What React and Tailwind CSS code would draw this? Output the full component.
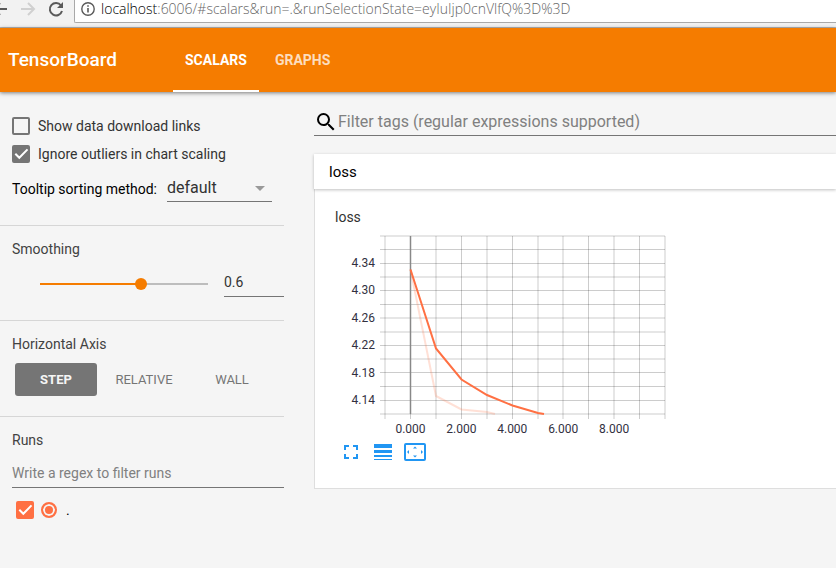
import { useState } from "react";

const xTicks = [385, 410.5, 436, 461.5, 487, 512.5, 538, 563, 588.5, 614, 639.5, 665].map((x) => x - 335);
const yTicks = [236, 249.5, 263.5, 277, 290.5, 304.5, 318, 332, 345.5, 359, 372.5, 386.5, 400.5, 414].map((y) => y - 230);
const yLabels = ["4.34", "4.30", "4.26", "4.22", "4.18", "4.14"];
const xLabels = ["0.000", "2.000", "4.000", "6.000", "8.000"];

function Check({ id, checked, onChange, accent, label }) {
  return (
    <span className="relative block h-[18px] w-[18px] shrink-0">
      <input
        id={id}
        type="checkbox"
        aria-label={label}
        checked={checked}
        onChange={onChange}
        className={
          "block h-[18px] w-[18px] appearance-none rounded-xs border-2 " +
          (accent
            ? "border-[#ff7043] checked:bg-[#ff7043]"
            : "border-[#757575] checked:bg-[#757575]")
        }
      />
      {checked && (
        <svg viewBox="0 0 18 18" className="pointer-events-none absolute inset-0 h-full w-full">
          <path d="M3.300 8.800l4 4 8.200-8.400" fill="none" stroke="#fff" strokeWidth="2" />
        </svg>
      )}
    </span>
  );
}

function BrowserBar() {
  return (
    <div className="flex h-7 items-start border-b border-[#b5b5b5] bg-[#f2f2f2]">
      <div className="flex w-[74px] shrink-0 items-center">
        <svg width="74" height="20" viewBox="0 0 74 20" fill="none" strokeWidth="2">
          <path d="M-6 9H7M0 3l-6 6 6 6" stroke="#5a5a5a" />
          <path d="M21 9h12M28 3l6 6-6 6" stroke="#d0d0d0" />
          <path d="M61 5.5A6.2 6.2 0 1 0 62 11" stroke="#5a5a5a" />
          <path d="M63 2v6h-6z" fill="#5a5a5a" />
        </svg>
      </div>
      <div className="flex h-[23px] flex-1 items-start gap-1.5 overflow-hidden rounded-bl-xs border-b border-l border-[#a9a9a9] bg-white pl-1.5">
        <svg width="14" height="18" viewBox="0 0 14 18" className="shrink-0">
          <circle cx="7" cy="9" r="6.2" fill="none" stroke="#5a5a5a" strokeWidth="1.4" />
          <path d="M7 8v4.5M7 5.2v1.6" stroke="#5a5a5a" strokeWidth="1.6" />
        </svg>
        <div className="font-['Open_Sans','Noto_Sans',sans-serif] text-sm leading-[18px] font-light whitespace-nowrap text-[#666]">
          <span className="text-black">localhost</span>:6006/#scalars&amp;run=.&amp;runSelectionState=eyIuIjp0cnVlfQ%3D%3D
        </div>
      </div>
    </div>
  );
}

function Chart() {
  return (
    <svg width="340" height="210" viewBox="0 0 340 210" className="block" role="img" aria-label="loss">
      <g stroke="#000" strokeOpacity="0.2" strokeWidth="1">
        {xTicks.map((x) => (
          <line key={x} x1={x} x2={x} y1="6" y2="189" />
        ))}
        {yTicks.map((y) => (
          <line key={y} x1="45" x2="330" y1={y} y2={y} />
        ))}
      </g>
      <path d="M75.5 6v178" stroke="#888" strokeWidth="1.5" />
      <path d="M75.5 39.5L101 166l25.5 13.5L152 182l8 2" fill="none" stroke="#ff7043" strokeOpacity="0.22" strokeWidth="2" />
      <path d="M75.5 39.5L101 118.5l25.5 31L152 165l25.5 10.5L203 183l6 1" fill="none" stroke="#ff7043" strokeWidth="2" />
      <g fill="#32313f" className="font-[Roboto,sans-serif] text-xs">
        {yLabels.map((t, i) => (
          <text key={t} x="40" y={37 + i * 27.4} textAnchor="end">{t}</text>
        ))}
        {xLabels.map((t, i) => (
          <text key={t} x={75.5 + i * 50.9} y="203" textAnchor="middle">{t}</text>
        ))}
      </g>
    </svg>
  );
}

export default function App() {
  const [links, setLinks] = useState(false);
  const [outliers, setOutliers] = useState(true);
  const [run, setRun] = useState(true);
  const [smooth, setSmooth] = useState("0.6");

  return (
    <div className="min-h-screen overflow-x-hidden bg-[#f5f5f5] font-[Roboto,sans-serif] text-sm leading-5 text-[#333]">
      <BrowserBar />
      <header className="relative flex h-16 items-stretch bg-[#f57c00] pl-2 text-white shadow-[0_1px_4px_rgba(0,0,0,0.5)]">
        <h1 className="flex w-[165px] items-center text-[19px] font-medium">TensorBoard</h1>
        <nav className="flex text-sm font-bold">
          <button className="border-b-2 border-white px-3 pt-0.5">SCALARS</button>
          <button className="border-b-2 border-transparent px-4 pt-0.5 text-white/75">GRAPHS</button>
        </nav>
      </header>

      <div className="flex">
        <aside className="w-[284px] shrink-0">
          <section className="border-b border-[#d6d6d6] pt-6 pb-[23px] pl-3">
            <div className="flex h-5 items-center gap-2">
              <Check id="links" checked={links} onChange={() => setLinks(!links)} />
              <label htmlFor="links">Show data download links</label>
            </div>
            <div className="mt-2 flex h-5 items-center gap-2">
              <Check id="outliers" checked={outliers} onChange={() => setOutliers(!outliers)} />
              <label htmlFor="outliers">Ignore outliers in chart scaling</label>
            </div>
            <div className="mt-2.5 flex h-7 items-center justify-between pr-3">
              <label htmlFor="sorting" className="pt-0.5 text-black">Tooltip sorting method:</label>
              <div className="relative w-[105px]">
                <select id="sorting" className="block h-7 w-full appearance-none border-b border-[#757575] text-base leading-6">
                  <option>default</option>
                </select>
                <svg width="10" height="5" viewBox="0 0 10 5" className="pointer-events-none absolute top-3 right-[7px]">
                  <path d="M0 0h10L5 5z" fill="#999" />
                </svg>
              </div>
            </div>
          </section>

          <section className="border-b border-[#d6d6d6] pt-[13px] pb-[23px] pl-3">
            <h2 className="text-[#424242]">Smoothing</h2>
            <div className="mt-3 flex items-center justify-end gap-2.5">
              <input
                type="range"
                aria-label="Smoothing"
                min="0"
                max="1"
                step="0.1"
                value={smooth}
                onChange={(e) => setSmooth(e.target.value)}
                className="h-3 w-[180px] appearance-none bg-[linear-gradient(to_right,#f57c00_60%,#bdbdbd_60%)] bg-[length:168px_2px] bg-center bg-no-repeat [&::-webkit-slider-thumb]:h-3 [&::-webkit-slider-thumb]:w-3 [&::-webkit-slider-thumb]:appearance-none [&::-webkit-slider-thumb]:rounded-full [&::-webkit-slider-thumb]:bg-[#f57c00]"
              />
              <input
                type="text"
                aria-label="Smoothing value"
                value={smooth}
                onChange={(e) => setSmooth(e.target.value)}
                className="h-[26px] w-[60px] border-b border-[#757575] pb-1"
              />
            </div>
          </section>

          <section className="border-b border-[#d6d6d6] pt-[13px] pb-5 pl-3">
            <h2 className="text-[#424242]">Horizontal Axis</h2>
            <div className="mt-[9px] flex h-[33px] gap-1.5 pl-[3px] text-[13px] text-[#757575]">
              <button className="w-[82px] rounded-[3px] bg-[#757575] font-bold text-[#f5f5f5]">STEP</button>
              <button className="w-[82px]">RELATIVE</button>
              <button className="w-[82px]">WALL</button>
            </div>
          </section>

          <section className="pt-[13px] pl-3">
            <h2 className="text-[#424242]">Runs</h2>
            <input
              type="text"
              aria-label="Filter runs"
              placeholder="Write a regex to filter runs"
              className="mt-[11px] block h-[27px] w-full border-b border-[#757575] pb-0.5 placeholder:text-[#808080]"
            />
            <div className="mt-3 flex h-5 items-center gap-[7px] pl-1">
              <Check id="run" accent label="Show run" checked={run} onChange={() => setRun(!run)} />
              <input
                id="only"
                type="radio"
                name="only"
                defaultChecked
                className="h-4 w-4 appearance-none rounded-full border-2 border-[#ff7043] checked:bg-[#ff7043] checked:shadow-[inset_0_0_0_2px_#f5f5f5]"
              />
              <label htmlFor="only" className="pl-0.5 text-black">.</label>
            </div>
          </section>
        </aside>

        <main className="ml-[30px] min-w-0 flex-1 pt-[15px]">
          <div className="flex h-[29px] items-center border-b border-[#757575] pt-0.5">
            <svg width="24" height="24" viewBox="0 0 24 24" className="shrink-0">
              <path d="M15.5 14h-.79l-.28-.27A6.471 6.471 0 0 0 16 9.5 6.5 6.5 0 1 0 9.500 16c1.610 0 3.090-.59 4.230-1.570l.27.28v.79l5 4.990L20.490 19l-4.990-5zm-6 0C7.010 14 5 11.990 5 9.500S7.010 5 9.500 5 14 7.010 14 9.500 11.990 14 9.500 14z" />
            </svg>
            <input
              type="text"
              aria-label="Filter tags"
              placeholder="Filter tags (regular expressions supported)"
              className="min-w-0 flex-1 text-base placeholder:text-[#808080]"
            />
          </div>

          <div className="mt-[18px]">
            <button className="relative block h-[35px] w-full bg-white pl-[15px] text-left text-[15px] text-black shadow-[0_1px_3px_rgba(0,0,0,0.25)]">
              loss
            </button>
            <div className="border-b border-l border-[#dedede] bg-white pt-[18px] pb-6 pl-5">
              <h3>loss</h3>
              <div className="mt-[3px]">
                <Chart />
              </div>
              <div className="flex h-6 items-center gap-[11px] pl-[5px] text-[#2196f3]">
                <button aria-label="Expand chart">
                  <svg width="22" height="24" viewBox="0 0 22 24" fill="none" stroke="currentColor" strokeWidth="2">
                    <path d="M5 10V6h4M13 6h4v4M17 14v4h-4M9 18H5v-4" />
                  </svg>
                </button>
                <button aria-label="Toggle log scale">
                  <svg width="20" height="24" viewBox="0 0 20 24" fill="currentColor">
                    <path d="M1 4h18v4H1zM1 10h18v3H1zM1 15h18v2H1zM1 19h18v1H1z" />
                  </svg>
                </button>
                <button aria-label="Fit domain to data">
                  <svg width="24" height="24" viewBox="0 0 24 24">
                    <rect x="1" y="4" width="20" height="16" rx="1" fill="none" stroke="currentColor" strokeWidth="2" />
                    <path d="M11 6.500l2 2h-4zM11 17.500l2-2h-4zM3 12l2-2v4zM19 12l-2-2v4z" fill="currentColor" />
                  </svg>
                </button>
              </div>
            </div>
          </div>
        </main>
      </div>
    </div>
  );
}
